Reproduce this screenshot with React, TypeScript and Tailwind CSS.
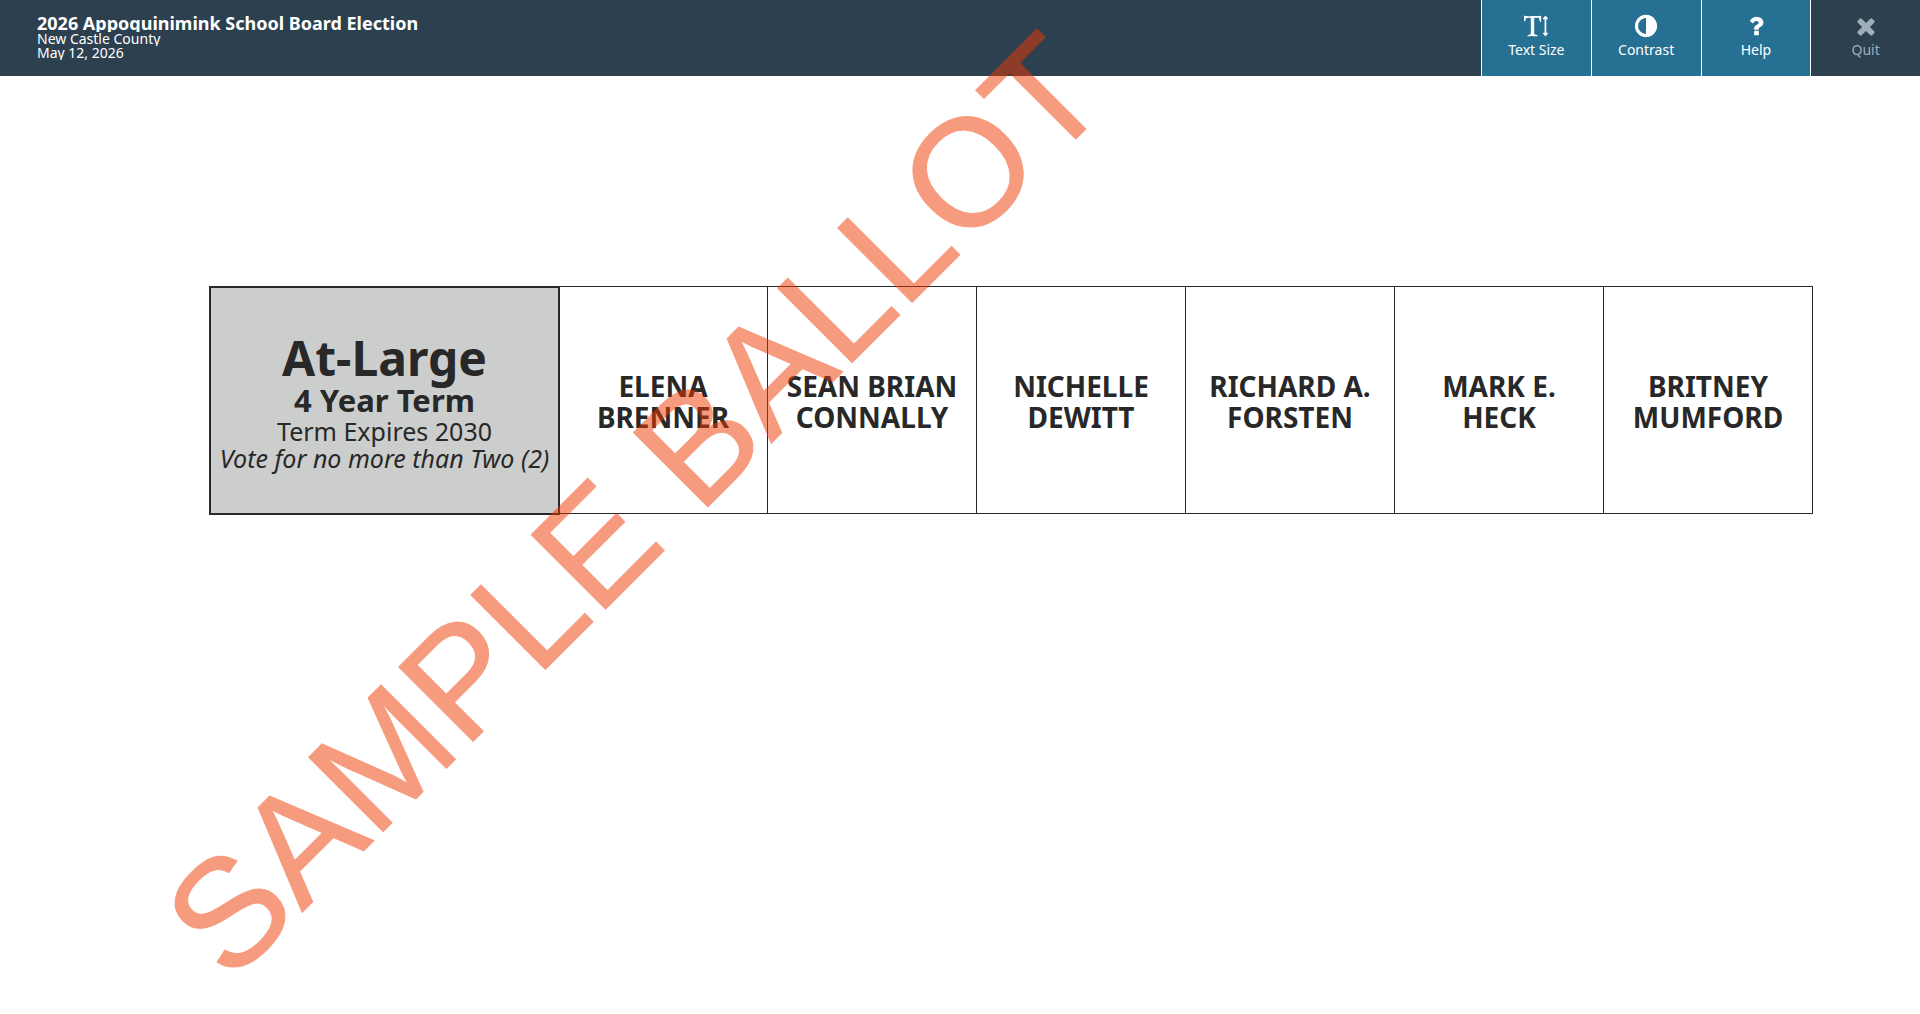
import type { ReactNode } from "react";

const candidates = [
  ["ELENA", "BRENNER"],
  ["SEAN BRIAN", "CONNALLY"],
  ["NICHELLE", "DEWITT"],
  ["RICHARD A.", "FORSTEN"],
  ["MARK E.", "HECK"],
  ["BRITNEY", "MUMFORD"],
];

function TextHeightIcon() {
  return (
    <svg width="26" height="24" viewBox="0 0 1792 1792" fill="currentColor" aria-hidden="true">
      <path d="M1744 1408q33 0 42 18.500t-11 44.500l-126 162q-20 26-49 26t-49-26l-126-162q-20-26-11-44.500t42-18.500h80v-1024h-80q-33 0-42-18.500t11-44.500l126-162q20-26 49-26t49 26l126 162q20 26 11 44.500t-42 18.500h-80v1024h80zM81 129l54 27q12 5 211 5 44 0 132-2t132-2q36 0 107.500.5t107.500.5h293q6 0 21 .5t20.500 0 16-3 17.500-9 15-17.500l42-1q4 0 14 .5t14 .5q2 112 2 336 0 80-5 109-39 14-68 18-25-44-54-128-3-9-11-48t-14.500-73.500-7.500-35.500q-6-8-12-12.500t-15.500-6-13-2.500-18-.5-16.500.5q-17 0-66.500-.5t-74.500-.5-64 2-71 6q-9 81-8 136 0 94 2 388t2 455q0 16-2.500 71.500t0 91.500 12.500 69q40 21 124 42.500t120 37.500q5 40 5 50 0 14-3 29l-34 1q-76 2-218-8t-207-10q-50 0-151 9t-152 9q-3-51-3-52v-9q17-27 61.500-43t98.500-29 78-27q19-42 19-383 0-101-3-303t-3-303v-117q0-2 .5-15.500t.5-25-1-25.500-3-24-5-14q-11-12-162-12-33 0-93 12t-80 26q-19 13-34 72.500t-31.500 111-42.500 53.500q-42-26-56-44v-383z" />
    </svg>
  );
}

function ContrastIcon() {
  return (
    <svg width="26" height="26" viewBox="0 0 1792 1792" fill="currentColor" aria-hidden="true">
      <path d="M896 1440v-1088q-148 0-273 73t-198 198-73 273 73 273 198 198 273 73zm768-544q0 209-103 385.500t-279.500 279.500-385.500 103-385.500-103-279.500-279.500-103-385.500 103-385.500 279.500-279.500 385.500-103 385.500 103 279.500 279.500 103 385.500z" />
    </svg>
  );
}

function HelpIcon() {
  return (
    <svg width="26" height="26" viewBox="0 0 1792 1792" fill="currentColor" aria-hidden="true">
      <path d="M1088 1256v240q0 16-12 28t-28 12h-240q-16 0-28-12t-12-28v-240q0-16 12-28t28-12h240q16 0 28 12t12 28zm316-600q0 54-15.500 101t-35 76.500-55 59.500-57.500 43.500-61 35.500q-41 23-68.500 65t-27.500 67q0 17-12 32.500t-28 15.500h-240q-15 0-25.500-18.500t-10.500-37.500v-45q0-83 65-156.500t143-108.500q59-27 84-56t25-76q0-42-46.500-74t-107.500-32q-65 0-108 29-35 25-107 115-13 16-31 16-12 0-25-8l-164-125q-13-10-15.500-25t5.500-28q160-266 464-266 80 0 161 31t146 83 106 127.500 41 158.500z" />
    </svg>
  );
}

function QuitIcon() {
  return (
    <svg width="26" height="26" viewBox="0 0 1792 1792" fill="currentColor" aria-hidden="true">
      <path d="M1490 1322q0 40-28 68l-136 136q-28 28-68 28t-68-28l-294-294-294 294q-28 28-68 28t-68-28l-136-136q-28-28-28-68t28-68l294-294-294-294q-28-28-28-68t28-68l136-136q28-28 68-28t68 28l294 294 294-294q28-28 68-28t68 28l136 136q28 28 28 68t-28 68l-294 294 294 294q28 28 28 68z" />
    </svg>
  );
}

function ToolbarButton({ label, icon, disabled = false }: { label: string; icon: ReactNode; disabled?: boolean }) {
  return (
    <button
      type="button"
      disabled={disabled}
      className="flex flex-1 flex-col items-center border-l border-white bg-[#267093] pt-[13px] text-sm leading-[22px] text-white disabled:bg-[#2c4050] disabled:text-[#9fafb9]"
    >
      <span className="flex h-[26px] items-center">{icon}</span>
      {label}
    </button>
  );
}

export default function App() {
  return (
    <div className="relative min-h-screen overflow-hidden bg-white font-['Noto_Sans',sans-serif] text-[#282828]">
      <header className="flex h-[76px] justify-between bg-[#2c4050] text-white">
        <div className="pt-[14px] pl-[37px]">
          <h1 className="overflow-hidden text-lg leading-[18px] font-bold">2026 Appoquinimink School Board Election</h1>
          <p className="overflow-hidden text-sm leading-[14px]">New Castle County</p>
          <p className="overflow-hidden text-sm leading-[14px]">May 12, 2026</p>
        </div>
        <nav className="flex w-[439px]">
          <ToolbarButton label="Text Size" icon={<TextHeightIcon />} />
          <ToolbarButton label="Contrast" icon={<ContrastIcon />} />
          <ToolbarButton label="Help" icon={<HelpIcon />} />
          <ToolbarButton label="Quit" icon={<QuitIcon />} disabled />
        </nav>
      </header>

      <main className="pt-[210px] pr-[107px] pl-[209px]">
        <section className="flex h-[229px]">
          <div className="-mr-px flex w-[351px] shrink-0 flex-col items-center justify-center border-2 border-[#282828] bg-[#cccecd] pt-px text-center">
            <h2 className="text-5xl leading-[52px] font-bold">At-Large</h2>
            <p className="text-[31px] leading-8 font-bold">4 Year Term</p>
            <p className="text-[25px] leading-[30px]">Term Expires 2030</p>
            <p className="text-[25px] leading-6 italic">Vote for no more than Two (2)</p>
          </div>
          <ul className="mb-px flex flex-1 border-t border-b border-[#282828]">
            {candidates.map(([first, last]) => (
              <li key={last} className="flex flex-1 border-r border-[#282828]">
                <button type="button" className="flex-1 pt-[3px] text-[28px] leading-[31px] font-bold">
                  {first}
                  <br />
                  {last}
                </button>
              </li>
            ))}
          </ul>
        </section>
      </main>

      {/* Watermark over the whole ballot, clicks pass through */}
      <div className="pointer-events-none absolute top-[505px] left-[634px] -translate-x-1/2 -translate-y-1/2 -rotate-45 font-['Liberation_Sans',sans-serif] text-[153px] leading-none whitespace-nowrap text-[#ef3900] opacity-50 [-webkit-text-stroke:1px_#ef3900]">
        SAMPLE BALLOT
      </div>
    </div>
  );
}
